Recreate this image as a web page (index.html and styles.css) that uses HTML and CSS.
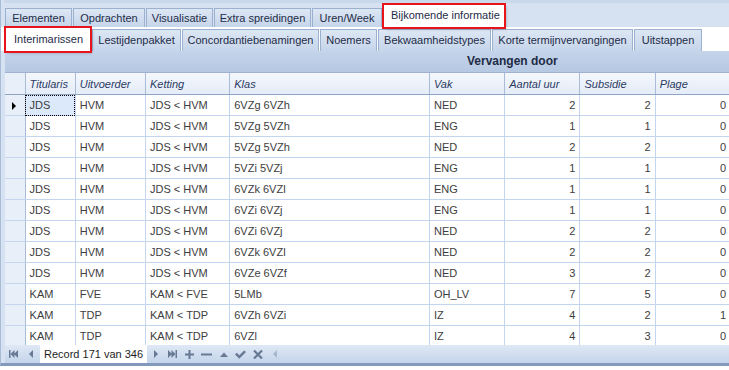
FILE: index.html
```html
<!DOCTYPE html>
<html>
<head>
    <meta charset="UTF-8">
    <title>Interimarissen</title>
    <link rel="stylesheet" href="styles.css">
</head>
<body>
    <div class="frame">
        <div class="tabs tabs-main">
            <div class="tab">Elementen</div>
            <div class="tab">Opdrachten</div>
            <div class="tab">Visualisatie</div>
            <div class="tab">Extra spreidingen</div>
            <div class="tab">Uren/Week</div>
            <div class="tab active marked">Bijkomende informatie</div>
        </div>
        <div class="tabs tabs-sub">
            <div class="tab active marked">Interimarissen</div>
            <div class="tab">Lestijdenpakket</div>
            <div class="tab">Concordantiebenamingen</div>
            <div class="tab">Noemers</div>
            <div class="tab">Bekwaamheidstypes</div>
            <div class="tab">Korte termijnvervangingen</div>
            <div class="tab">Uitstappen</div>
        </div>

        <div class="grid">
            <div class="band">Vervangen door</div>
            <table class="data">
                <colgroup>
                    <col class="c-ind"><col class="c-tit"><col class="c-uit"><col class="c-ket"><col class="c-klas">
                    <col class="c-vak"><col class="c-num"><col class="c-num"><col class="c-num">
                </colgroup>
                <thead>
                    <tr>
                        <th class="ind"></th>
                        <th>Titularis</th>
                        <th>Uitvoerder</th>
                        <th>Ketting</th>
                        <th>Klas</th>
                        <th>Vak</th>
                        <th>Aantal uur</th>
                        <th>Subsidie</th>
                        <th>Plage</th>
                    </tr>
                </thead>
                <tbody id="rows"></tbody>
            </table>
        </div>

        <div class="nav">
            <span class="btn first"><svg width="9" height="8" viewBox="0 0 9 8"><rect x="0" y="0" width="1.5" height="8"/><path d="M5.5 0 L1.5 4 L5.5 8Z M9 0 L5 4 L9 8Z"/></svg></span>
            <span class="btn"><svg width="4" height="8" viewBox="0 0 4 8"><path d="M4 0 L0 4 L4 8Z"/></svg></span>
            <span class="record">Record 171 van 346</span>
            <span class="btn"><svg width="4" height="8" viewBox="0 0 4 8"><path d="M0 0 L4 4 L0 8Z"/></svg></span>
            <span class="btn"><svg width="9" height="8" viewBox="0 0 9 8"><path d="M0 0 L4 4 L0 8Z M3.5 0 L7.5 4 L3.5 8Z"/><rect x="7.5" y="0" width="1.5" height="8"/></svg></span>
            <span class="btn"><svg width="9" height="9" viewBox="0 0 9 9"><rect x="3.5" y="0" width="2" height="9"/><rect x="0" y="3.5" width="9" height="2"/></svg></span>
            <span class="btn"><svg width="11" height="9" viewBox="0 0 11 9"><rect x="0" y="3.5" width="11" height="2"/></svg></span>
            <span class="btn"><svg width="8" height="9" viewBox="0 0 8 9"><path d="M0 7 L4 2.5 L8 7Z"/></svg></span>
            <span class="btn"><svg width="11" height="9" viewBox="0 0 11 9"><path d="M0 4.5 L1.8 2.8 L4.3 5.3 L9.2 0.4 L11 2.1 L4.3 8.8Z"/></svg></span>
            <span class="btn"><svg width="10" height="9" viewBox="0 0 10 9"><path class="line" d="M1 0.5 L9 8.5 M9 0.5 L1 8.5"/></svg></span>
            <span class="btn off"><svg width="4" height="8" viewBox="0 0 4 8"><path d="M4 0 L0 4 L4 8Z"/></svg></span>
        </div>
    </div>

    <script>
        // rows of the grid: titularis, uitvoerder, ketting, klas, vak, uren, subsidie, plage
        const rows = [
            ['JDS', 'HVM', 'JDS < HVM', '6VZg 6VZh', 'NED', 2, 2, 0],
            ['JDS', 'HVM', 'JDS < HVM', '5VZg 5VZh', 'ENG', 1, 1, 0],
            ['JDS', 'HVM', 'JDS < HVM', '5VZg 5VZh', 'NED', 2, 2, 0],
            ['JDS', 'HVM', 'JDS < HVM', '5VZi 5VZj', 'ENG', 1, 1, 0],
            ['JDS', 'HVM', 'JDS < HVM', '6VZk 6VZl', 'ENG', 1, 1, 0],
            ['JDS', 'HVM', 'JDS < HVM', '6VZi 6VZj', 'ENG', 1, 1, 0],
            ['JDS', 'HVM', 'JDS < HVM', '6VZi 6VZj', 'NED', 2, 2, 0],
            ['JDS', 'HVM', 'JDS < HVM', '6VZk 6VZl', 'NED', 2, 2, 0],
            ['JDS', 'HVM', 'JDS < HVM', '6VZe 6VZf', 'NED', 3, 2, 0],
            ['KAM', 'FVE', 'KAM < FVE', '5LMb', 'OH_LV', 7, 5, 0],
            ['KAM', 'TDP', 'KAM < TDP', '6VZh 6VZi', 'IZ', 4, 2, 1],
            ['KAM', 'TDP', 'KAM < TDP', '6VZl', 'IZ', 4, 3, 0]
        ];

        const body = document.getElementById('rows');
        rows.forEach((r, i) => {
            const tr = document.createElement('tr');
            const ind = document.createElement('td');
            ind.className = 'ind';
            if (i === 0) ind.innerHTML = '<span class="arrow"></span>';
            tr.appendChild(ind);
            r.forEach((v, j) => {
                const td = document.createElement('td');
                td.textContent = v;
                if (j >= 5) td.className = 'num';
                if (i === 0 && j === 0) td.className = 'focus';
                tr.appendChild(td);
            });
            body.appendChild(tr);
        });
    </script>
</body>
</html>
```

FILE: styles.css
```css
html, body {
    margin: 0;
    padding: 0;
}

body {
    width: 729px;
    height: 370px;
    overflow: hidden;
    background: #fff;
    font-family: "Liberation Sans", Arial, sans-serif;
    font-size: 11px;
}

.frame {
    height: 366px;
    display: flex;
    flex-direction: column;
    background: #d6e2f2;
    border-left: 1px solid #a9bcd6;
    padding-left: 3px;
    box-sizing: border-box;
    border-bottom: 3px solid #8299bb;
}

/* Tabs */
.tabs {
    display: flex;
    align-items: flex-end;
    padding-left: 1px;
}

.tabs-main {
    height: 27px;
    border-top: 3px solid #c9d8eb;
    box-sizing: border-box;
}

.tabs-sub {
    height: 24px;
    background: #fff;
    margin-left: -3px;
    padding-left: 4px;
}

.tab {
    flex: none;
    height: 19px;
    line-height: 19px;
    text-align: center;
    color: #1e2c48;
    background: linear-gradient(#dde7f4, #c6d5ea);
    border: 1px solid #9cb1cf;
    border-bottom: none;
    margin-right: 1px;
    box-sizing: border-box;
}

.tabs-main .tab:nth-child(1) { width: 67px; }
.tabs-main .tab:nth-child(2) { width: 72px; }
.tabs-main .tab:nth-child(3) { width: 67px; }
.tabs-main .tab:nth-child(4) { width: 97px; }
.tabs-main .tab:nth-child(5) { width: 70px; }
.tabs-main .tab:nth-child(6) { width: 120px; margin-left: 1px; }

.tabs-sub .tab {
    height: 22px;
    line-height: 21px;
}

.tabs-sub .tab:nth-child(1) { width: 84px; margin-left: 1px; margin-right: 2px; }
.tabs-sub .tab:nth-child(2) { width: 89px; }
.tabs-sub .tab:nth-child(3) { width: 137px; }
.tabs-sub .tab:nth-child(4) { width: 57px; }
.tabs-sub .tab:nth-child(5) { width: 113px; }
.tabs-sub .tab:nth-child(6) { width: 141px; }
.tabs-sub .tab:nth-child(7) { width: 68px; }

.tab.active {
    background: #fff;
    height: 22px;
    border-color: #fff;
    text-align: left;
    padding-left: 6px;
}

.tabs-sub .tab.active {
    height: 23px;
    padding-left: 7px;
}

.tab.marked {
    outline: 2px solid #e8141c;
    outline-offset: 0;
    box-shadow: 2px 2px 3px rgba(0, 0, 0, 0.25);
    position: relative;
}

/* Grid */
.grid {
    flex: 1;
    overflow: hidden;
    background: #fff;
    margin-left: 1px;
}

.band {
    height: 22px;
    line-height: 20px;
    background: linear-gradient(#c4d4ea, #b6c9e2);
    border-bottom: 1px solid #9fb3d0;
    box-sizing: border-box;
    font-weight: bold;
    font-size: 12px;
    color: #1d2b45;
    padding-left: 462px;
}

.data {
    border-collapse: collapse;
    table-layout: fixed;
    width: 726px;
}

.c-ind { width: 20px; }
.c-tit { width: 50px; }
.c-uit { width: 70px; }
.c-ket { width: 84px; }
.c-klas { width: 199px; }
.c-vak { width: 75px; }
.c-num { width: 75px; }

.data th {
    height: 21px;
    padding: 0 4px;
    text-align: left;
    font-weight: normal;
    font-style: italic;
    color: #2b3a62;
    background: linear-gradient(#f4f7fc, #e4ecf8);
    border-right: 1px solid #a8bcd8;
    border-bottom: 1px solid #8ea5c6;
    white-space: nowrap;
}

.data td {
    height: 20px;
    padding: 0 4px;
    color: #3d3d3d;
    border-right: 1px solid #c4d5ef;
    border-bottom: 1px solid #c4d5ef;
    white-space: nowrap;
    overflow: hidden;
}

.data .ind {
    background: #e9eff8;
    border-right: 1px solid #a8bcd8;
    padding: 0;
    position: relative;
}

.data td.num {
    text-align: right;
}

.data td.focus {
    background: #dce9fb;
    outline: 1px dotted #000;
    outline-offset: -1px;
}

.arrow {
    position: absolute;
    left: 7px;
    top: 7px;
    border-left: 4px solid #000;
    border-top: 4px solid transparent;
    border-bottom: 4px solid transparent;
}

/* Navigator */
.nav {
    height: 18px;
    display: flex;
    align-items: center;
    background: linear-gradient(#dfe8f5, #c4d4ea);
    margin-left: 1px;
    flex: none;
}

.btn {
    flex: none;
    display: flex;
    align-items: center;
    justify-content: center;
    width: 17px;
    height: 18px;
    fill: #687994;
}

.btn .line {
    stroke: #687994;
    stroke-width: 2.2;
}

.btn.off {
    fill: #a8b6ca;
}

.record {
    flex: none;
    background: #fff;
    width: 107px;
    height: 18px;
    line-height: 18px;
    margin-left: 1px;
    padding-left: 4px;
    box-sizing: border-box;
    white-space: nowrap;
    font-size: 11px;
    color: #1e1e1e;
}
```
